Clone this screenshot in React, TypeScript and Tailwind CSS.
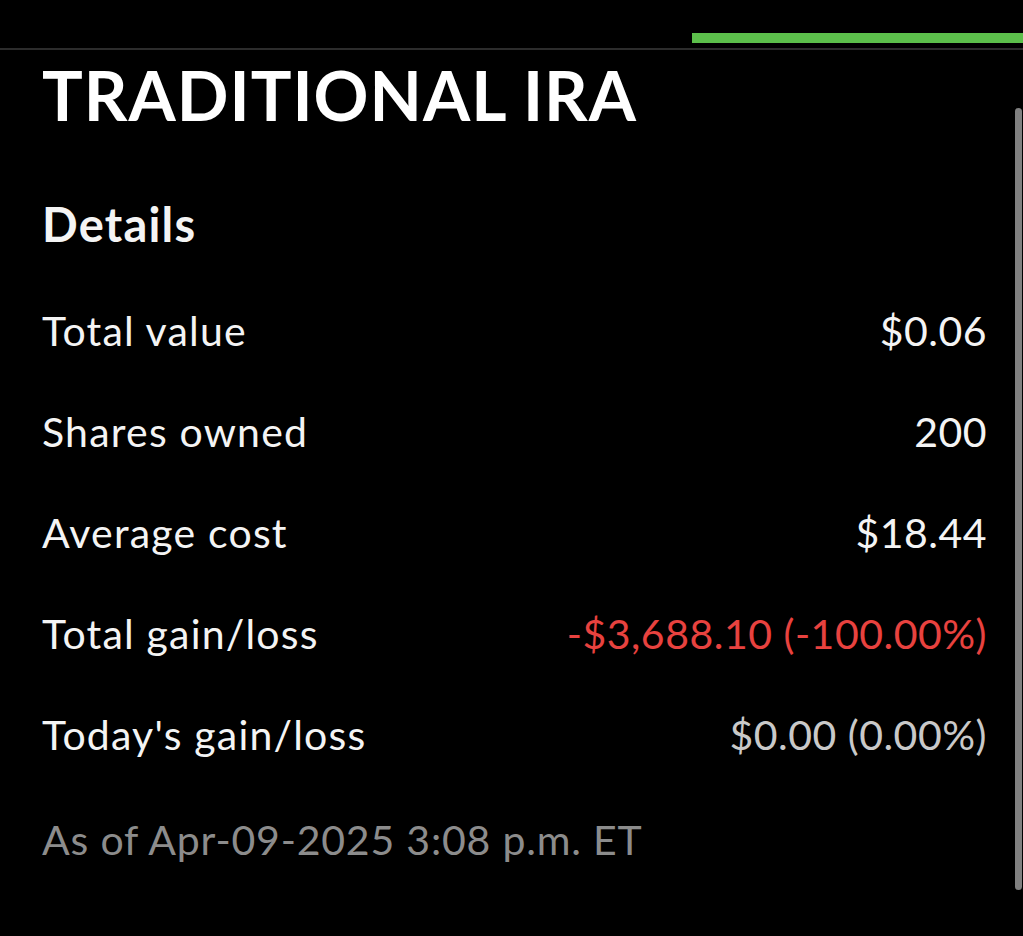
const ROWS: { label: string; value: string; tone: string }[] = [
  { label: 'Total value', value: '$0.06', tone: 'text-[#f4f4f4]' },
  { label: 'Shares owned', value: '200', tone: 'text-[#f4f4f4]' },
  { label: 'Average cost', value: '$18.44', tone: 'text-[#f4f4f4]' },
  { label: 'Total gain/loss', value: '-$3,688.10 (-100.00%)', tone: 'text-[#e8423f]' },
  { label: "Today's gain/loss", value: '$0.00 (0.00%)', tone: 'text-[#c9c9c9]' },
]

function DetailRow({ label, value, tone }: { label: string; value: string; tone: string }) {
  return (
    <div className="flex items-center justify-between h-[101px]">
      <span className="text-[41px] tracking-[1.2px] text-[#f4f4f4]">{label}</span>
      <span className={`text-[41px] tracking-[0.5px] ${tone}`}>{value}</span>
    </div>
  )
}

export default function App() {
  return (
    <div
      className="relative w-[1023px] h-[936px] bg-black overflow-hidden"
      style={{ fontFamily: 'Lato, "Noto Sans", sans-serif' }}
    >
      {/* tab indicator */}
      <div className="flex justify-end pt-[33px]">
        <div className="w-[331px] h-[10px] bg-[#5cbf4b]" />
      </div>
      <div className="mt-[5px] h-[2px] bg-[#2c2c2c]" />

      <div className="pl-[42px] pr-[36px]">
        <h1 className="mt-[11px] text-[68px] leading-none font-bold text-white tracking-[1px]">
          TRADITIONAL IRA
        </h1>

        <h2 className="mt-[72px] text-[47px] leading-none font-bold tracking-[1.2px] text-[#f4f4f4]">
          Details
        </h2>

        <div className="mt-[32px]">
          {ROWS.map((r) => (
            <DetailRow key={r.label} {...r} />
          ))}
        </div>

        <p className="mt-[24px] text-[41px] tracking-[0.8px] text-[#8c8c8c]">
          As of Apr-09-2025 3:08 p.m. ET
        </p>
      </div>

      {/* scrollbar */}
      <div className="absolute right-[1px] top-[108px] w-[7px] h-[782px] rounded-full bg-[#808080]" />
    </div>
  )
}
